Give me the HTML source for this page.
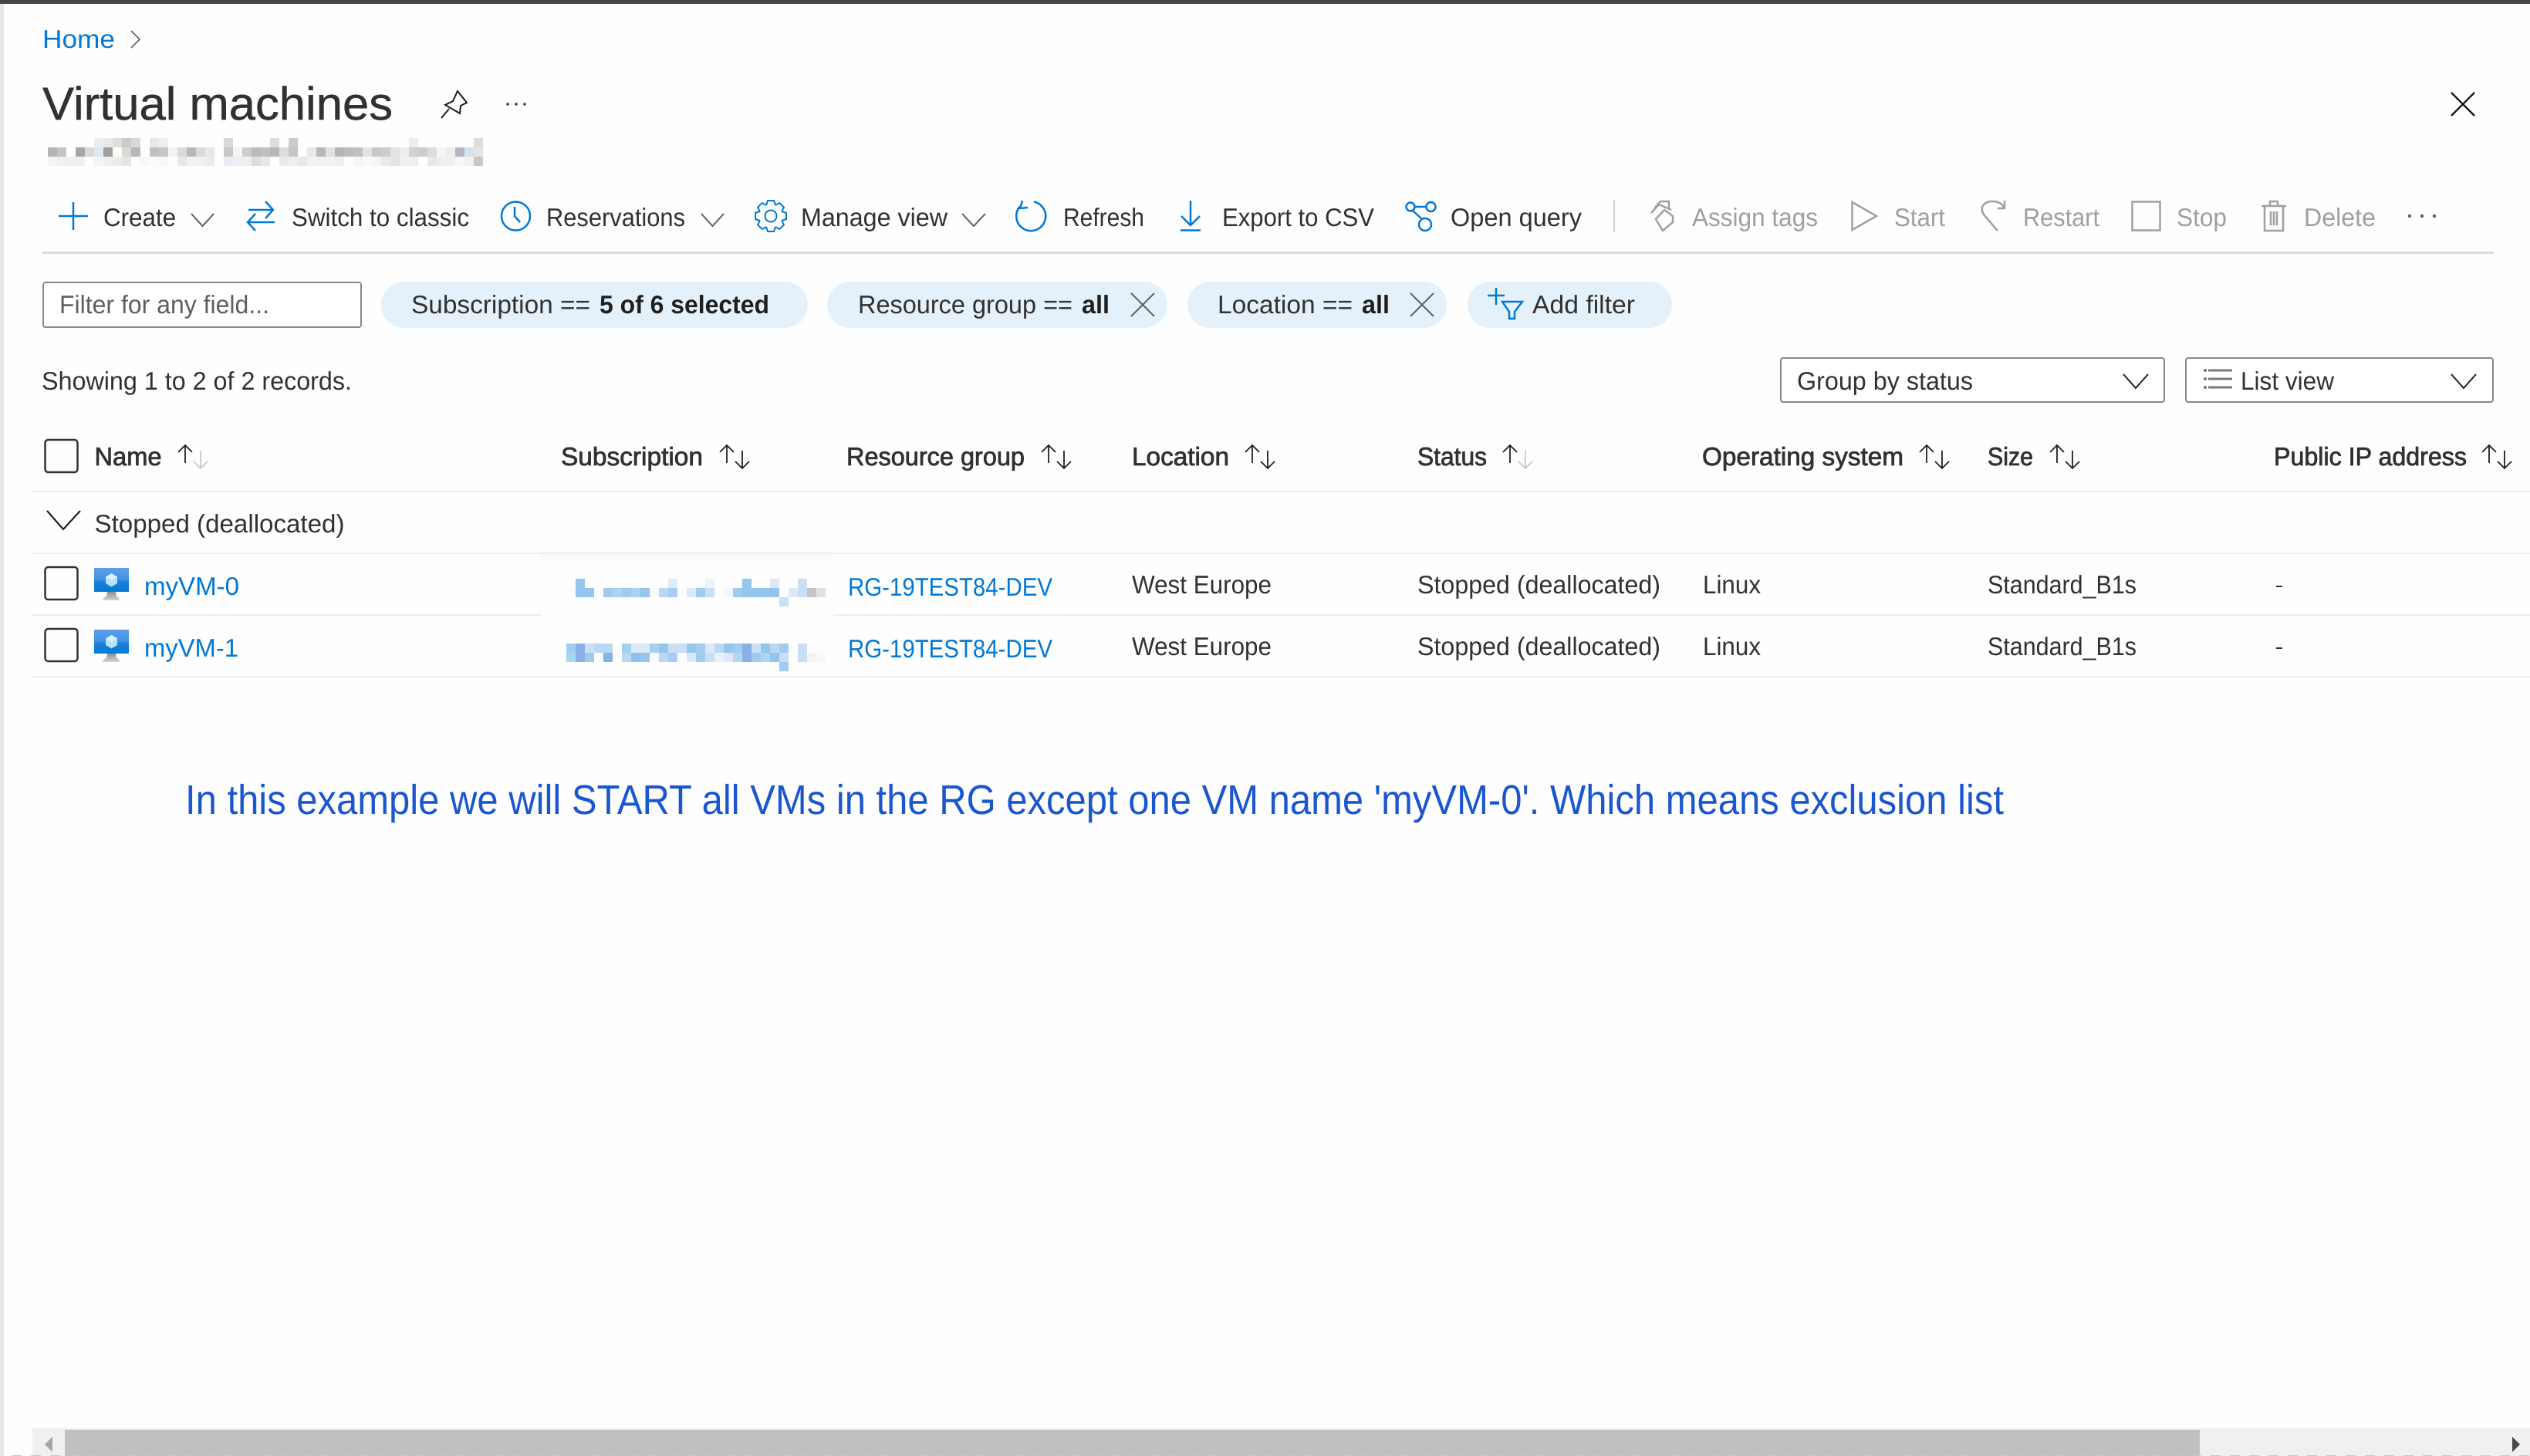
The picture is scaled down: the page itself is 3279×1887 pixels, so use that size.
<!DOCTYPE html>
<html lang="en">
<head>
<meta charset="utf-8">
<title>Virtual machines</title>
<style>
html,body{margin:0;padding:0;background:#fefefe;width:3279px;height:1887px;overflow:hidden}
svg{display:block;font-family:"Liberation Sans",sans-serif;text-rendering:geometricPrecision}
.t{font-size:33px;fill:#323130}
.d{font-size:33px;fill:#a19f9d}
.h{font-size:33px;fill:#323130;stroke:#323130;stroke-width:.8}
.l{font-size:33px;fill:#0078d4}
.b{font-size:33px;fill:#201f1e;font-weight:700}
.p rect{width:12px;height:12px}
.i{fill:none;stroke:#0078d4;stroke-width:2.5}
.g{fill:none;stroke:#a19f9d;stroke-width:2.5}
.c{fill:none;stroke:#605e5c;stroke-width:2}
.k{fill:none;stroke:#323130;stroke-width:2.5}
.a{fill:none;stroke:#201f1e;stroke-width:1.8}
.a2{fill:none;stroke:#c8c8c8;stroke-width:1.8}
</style>
</head>
<body>
<svg xmlns="http://www.w3.org/2000/svg" width="3279" height="1887" viewBox="0 0 3279 1887">
<defs>
<linearGradient id="vm" x1="0" y1="0" x2="0" y2="1"><stop offset="0" stop-color="#5ea0ea"/><stop offset=".5" stop-color="#4190e2"/><stop offset=".55" stop-color="#1f82dc"/><stop offset="1" stop-color="#0078d4"/></linearGradient>
<linearGradient id="st" x1="0" y1="0" x2="0" y2="1"><stop offset="0" stop-color="#8f8f8f"/><stop offset="1" stop-color="#d4d4d4"/></linearGradient>
<path id="up" d="M0 24V1M-9 10L0 1L9 10"/>
<path id="dn" d="M0 1V24M-9 15L0 24L9 15"/>
<g id="vmi">
<rect x="122" y="736" width="45" height="31" fill="url(#vm)"/>
<path d="M139 767H150L151 773C154 774 155 776 155 778H133C133 776 135 774 138 773Z" fill="url(#st)"/>
<path d="M144.500 743L152 747.500V756L144.500 760.500L137 756V747.500Z" fill="#b3e5fb"/>
<path d="M144.500 743L152 747.500L144.500 752L137 747.500Z" fill="#d6f4ff"/>
</g>
</defs>

<rect x="0" y="0" width="3279" height="1887" fill="#fefefe"/>
<rect x="0" y="0" width="5" height="1887" fill="#e8e8e8"/>
<rect x="0" y="0" width="3279" height="5" fill="#474544"/>

<!-- breadcrumb -->
<text class="l" x="55" y="62" textLength="94" lengthAdjust="spacingAndGlyphs">Home</text>
<path d="M170 40L181 51L170 62" fill="none" stroke="#605e5c" stroke-width="1.600"/>

<!-- title -->
<text x="55" y="155" font-size="60" fill="#323130" stroke="#323130" stroke-width=".5" textLength="454" lengthAdjust="spacingAndGlyphs">Virtual machines</text>
<path d="M593 118L605 133L597 137L596 147L577 136L587 131ZM582 141L572 153" fill="none" stroke="#1b1a19" stroke-width="2"/>
<g fill="#323130"><circle cx="658" cy="135" r="1.700"/><circle cx="669" cy="135" r="1.700"/><circle cx="680" cy="135" r="1.700"/></g>
<path d="M3177 120L3207 150M3207 120L3177 150" stroke="#111" stroke-width="2.300" fill="none"/>

<!-- blurred subtitle -->
<g class="p">
<rect x="122" y="179" fill="#eee"/><rect x="134" y="179" fill="#e8e8e8"/><rect x="146" y="179" fill="#ddd"/><rect x="158" y="179" fill="#ccc"/><rect x="170" y="179" fill="#d8d8d8"/><rect x="194" y="179" fill="#e8e8e8"/><rect x="206" y="179" fill="#eee"/><rect x="290" y="179" fill="#d8d8d8"/><rect x="350" y="179" fill="#ddd"/><rect x="374" y="179" fill="#ccc"/><rect x="530" y="179" fill="#f0ece8"/><rect x="614" y="179" fill="#ddd"/>
<rect x="62" y="191" fill="#b5b5b5"/><rect x="74" y="191" fill="#c5c5c5"/><rect x="98" y="191" fill="#a8a5a2"/><rect x="110" y="191" fill="#d8d8d8"/><rect x="122" y="191" fill="#e0e8f0"/><rect x="134" y="191" fill="#a0a0a0"/><rect x="146" y="191" fill="#fffdf5"/><rect x="158" y="191" fill="#d8d8d8"/><rect x="170" y="191" fill="#b8b8b8"/><rect x="194" y="191" fill="#c0c0c0"/><rect x="206" y="191" fill="#c8c8c8"/><rect x="218" y="191" fill="#f0f4f8"/><rect x="230" y="191" fill="#dadada"/><rect x="242" y="191" fill="#b8b8b8"/><rect x="254" y="191" fill="#d8dadc"/><rect x="266" y="191" fill="#e8e8e8"/><rect x="290" y="191" fill="#c8c8c8"/><rect x="302" y="191" fill="#f5f5f5"/><rect x="314" y="191" fill="#ccc"/><rect x="326" y="191" fill="#bbb"/><rect x="338" y="191" fill="#c0c0c0"/><rect x="350" y="191" fill="#b8b8b8"/><rect x="362" y="191" fill="#ddd"/><rect x="374" y="191" fill="#c5c5c5"/><rect x="398" y="191" fill="#e8e8e8"/><rect x="410" y="191" fill="#b8b8b8"/><rect x="422" y="191" fill="#e0e0e0"/><rect x="434" y="191" fill="#b5b5b5"/><rect x="446" y="191" fill="#bbb"/><rect x="458" y="191" fill="#c0c0c0"/><rect x="470" y="191" fill="#e5e3df"/><rect x="482" y="191" fill="#c8c8c8"/><rect x="494" y="191" fill="#ccc"/><rect x="506" y="191" fill="#e4e4e4"/><rect x="518" y="191" fill="#ededed"/><rect x="530" y="191" fill="#d0d0d0"/><rect x="542" y="191" fill="#ccc"/><rect x="554" y="191" fill="#e0dcd5"/><rect x="566" y="191" fill="#f5f5f5"/><rect x="578" y="191" fill="#eee"/><rect x="590" y="191" fill="#b5b5c0"/><rect x="602" y="191" fill="#d5e2f0"/><rect x="614" y="191" fill="#e5e5e5"/>
<rect x="62" y="203" fill="#f5f5f5"/><rect x="74" y="203" fill="#f0f0f0"/><rect x="86" y="203" fill="#f0f0f0"/><rect x="98" y="203" fill="#f0f0f0"/><rect x="122" y="203" fill="#f4f4f4"/><rect x="134" y="203" fill="#eee"/><rect x="146" y="203" fill="#ececec"/><rect x="158" y="203" fill="#e4e4e4"/><rect x="182" y="203" fill="#f8f8f8"/><rect x="194" y="203" fill="#fdfdf8"/><rect x="206" y="203" fill="#f8f8f8"/><rect x="230" y="203" fill="#e8e8e8"/><rect x="242" y="203" fill="#f2f2f2"/><rect x="254" y="203" fill="#f0f0f0"/><rect x="266" y="203" fill="#ebebeb"/><rect x="290" y="203" fill="#e8ecf4"/><rect x="302" y="203" fill="#eee"/><rect x="314" y="203" fill="#eee"/><rect x="326" y="203" fill="#ddd"/><rect x="338" y="203" fill="#e8e8e8"/><rect x="362" y="203" fill="#eaeaea"/><rect x="374" y="203" fill="#eee"/><rect x="386" y="203" fill="#e8e8e8"/><rect x="398" y="203" fill="#f2f2f2"/><rect x="410" y="203" fill="#f0f0f0"/><rect x="422" y="203" fill="#f2f2f2"/><rect x="434" y="203" fill="#eee"/><rect x="458" y="203" fill="#f5f5f5"/><rect x="470" y="203" fill="#f8f8f8"/><rect x="482" y="203" fill="#f5f5f5"/><rect x="494" y="203" fill="#eaeaea"/><rect x="506" y="203" fill="#e4e4e4"/><rect x="518" y="203" fill="#f0f0f0"/><rect x="530" y="203" fill="#eee"/><rect x="554" y="203" fill="#e8e8e8"/><rect x="566" y="203" fill="#eee"/><rect x="578" y="203" fill="#f0f0f0"/><rect x="590" y="203" fill="#f8f8f8"/><rect x="602" y="203" fill="#f0f0f0"/><rect x="614" y="203" fill="#c8c8c8"/>
</g>

<!-- toolbar -->
<path class="i" d="M76 280H114M95 262V298"/>
<text class="t" x="134" y="293" textLength="94" lengthAdjust="spacingAndGlyphs">Create</text>
<path class="c" d="M248 277L262.500 293L277 277"/>
<path class="i" d="M322 272H354M344 261L354 272L344 283M356 288H321M331 277L321 288L331 299"/>
<text class="t" x="378" y="293" textLength="230" lengthAdjust="spacingAndGlyphs">Switch to classic</text>
<circle class="i" cx="668.500" cy="280" r="18.500"/>
<path class="i" d="M667 268V280L674 288" stroke-width="2"/>
<text class="t" x="708" y="293" textLength="180" lengthAdjust="spacingAndGlyphs">Reservations</text>
<path class="c" d="M909 277L923.500 293L938 277"/>
<g transform="translate(999 280)" fill="none" stroke="#0078d4" stroke-width="2">
<circle r="7.500"/>
<path d="M-6-14L-4-20H4L6-14"/>
<path transform="rotate(45)" d="M-6-14L-4-20H4L6-14"/>
<path transform="rotate(90)" d="M-6-14L-4-20H4L6-14"/>
<path transform="rotate(135)" d="M-6-14L-4-20H4L6-14"/>
<path transform="rotate(180)" d="M-6-14L-4-20H4L6-14"/>
<path transform="rotate(225)" d="M-6-14L-4-20H4L6-14"/>
<path transform="rotate(270)" d="M-6-14L-4-20H4L6-14"/>
<path transform="rotate(315)" d="M-6-14L-4-20H4L6-14"/>
</g>
<text class="t" x="1038" y="293" textLength="190" lengthAdjust="spacingAndGlyphs">Manage view</text>
<path class="c" d="M1247 277L1262 293L1277 277"/>
<path class="i" d="M1340 261.500A19 19 0 1 1 1322 267.500M1325 260L1322 270L1332 269"/>
<text class="t" x="1378" y="293" textLength="105" lengthAdjust="spacingAndGlyphs">Refresh</text>
<path class="i" d="M1543 260V291M1531 280L1543 292L1555 280M1530 298.500H1556"/>
<text class="t" x="1584" y="293" textLength="197" lengthAdjust="spacingAndGlyphs">Export to CSV</text>
<g class="i"><circle cx="1828" cy="268" r="5.500"/><circle cx="1854.500" cy="268" r="6"/><circle cx="1847" cy="291" r="8"/><path d="M1834 268H1848M1831 273L1843 284"/></g>
<text class="t" x="1880" y="293" textLength="170" lengthAdjust="spacingAndGlyphs">Open query</text>
<rect x="2091" y="259" width="2" height="42" fill="#d2d0ce"/>
<path class="g" d="M2146 284L2157 272L2168 280V288L2155 299ZM2140 276L2150 265L2166 272M2145 269L2152 261H2163V271" stroke-width="2"/>
<text class="d" x="2193" y="293" textLength="163" lengthAdjust="spacingAndGlyphs">Assign tags</text>
<path class="g" d="M2400.500 262V298L2432 280Z"/>
<text class="d" x="2455" y="293" textLength="66" lengthAdjust="spacingAndGlyphs">Start</text>
<path class="g" d="M2589 299L2571 278C2565 268 2572 261 2582 261C2590 261 2595 264 2597 269M2598 260V270H2589"/>
<text class="d" x="2622" y="293" textLength="99" lengthAdjust="spacingAndGlyphs">Restart</text>
<rect class="g" x="2763.500" y="261.500" width="36" height="37" stroke-width="3"/>
<text class="d" x="2821" y="293" textLength="65" lengthAdjust="spacingAndGlyphs">Stop</text>
<path class="g" d="M2931 267H2963M2942 267V261H2952V267M2935 268V299H2959V268M2943 274V292M2947 274V292M2951 274V292" stroke-width="2"/>
<text class="d" x="2986" y="293" textLength="93" lengthAdjust="spacingAndGlyphs">Delete</text>
<g fill="#605e5c"><circle cx="3123" cy="280" r="2.200"/><circle cx="3139" cy="280" r="2.200"/><circle cx="3155" cy="280" r="2.200"/></g>
<rect x="55" y="326" width="3177" height="3" fill="#dcdcdc"/>

<!-- filters -->
<rect x="56" y="366" width="412" height="58" rx="3" fill="#fff" stroke="#8a8886" stroke-width="2"/>
<text x="77" y="406" font-size="33" fill="#605e5c" textLength="272" lengthAdjust="spacingAndGlyphs">Filter for any field...</text>
<rect x="494" y="365" width="553" height="60" rx="30" fill="#e5f1fa"/>
<text class="t" x="533" y="406" fill="#201f1e" textLength="232" lengthAdjust="spacingAndGlyphs">Subscription ==</text>
<text class="b" x="777" y="406" textLength="220" lengthAdjust="spacingAndGlyphs">5 of 6 selected</text>
<rect x="1072" y="365" width="441" height="60" rx="30" fill="#e5f1fa"/>
<text class="t" x="1112" y="406" textLength="278" lengthAdjust="spacingAndGlyphs">Resource group ==</text>
<text class="b" x="1402" y="406" textLength="36" lengthAdjust="spacingAndGlyphs">all</text>
<path class="c" d="M1466 380L1496 410M1496 380L1466 410"/>
<rect x="1539" y="365" width="336" height="60" rx="30" fill="#e5f1fa"/>
<text class="t" x="1578" y="406" textLength="175" lengthAdjust="spacingAndGlyphs">Location ==</text>
<text class="b" x="1765" y="406" textLength="36" lengthAdjust="spacingAndGlyphs">all</text>
<path class="c" d="M1828 380L1858 410M1858 380L1828 410"/>
<rect x="1902" y="365" width="265" height="60" rx="30" fill="#e5f1fa"/>
<path class="i" d="M1928 383H1950M1939 373V395M1947 391H1973L1963 404V413H1956V404Z"/>
<text class="t" x="1986" y="406" textLength="133" lengthAdjust="spacingAndGlyphs">Add filter</text>

<text class="t" x="54" y="505" textLength="402" lengthAdjust="spacingAndGlyphs">Showing 1 to 2 of 2 records.</text>

<rect x="2308" y="464" width="497" height="57" rx="3" fill="#fff" stroke="#8a8886" stroke-width="2"/>
<text class="t" x="2329" y="505" textLength="228" lengthAdjust="spacingAndGlyphs">Group by status</text>
<path d="M2752 485L2768 503L2784 485" fill="none" stroke="#201f1e" stroke-width="2"/>
<rect x="2833" y="464" width="398" height="57" rx="3" fill="#fff" stroke="#8a8886" stroke-width="2"/>
<path d="M2862 480H2893M2862 491H2893M2862 502H2893" stroke="#7a7a7a" stroke-width="3" fill="none"/>
<g fill="#8a7060"><circle cx="2858" cy="480" r="2"/><circle cx="2858" cy="491" r="2"/><circle cx="2858" cy="502" r="2"/></g>
<text class="t" x="2904" y="505" textLength="121" lengthAdjust="spacingAndGlyphs">List view</text>
<path d="M3177 485L3193 503L3209 485" fill="none" stroke="#201f1e" stroke-width="2"/>

<!-- table header -->
<rect class="k" x="58.500" y="570" width="42" height="42" rx="4"/>
<text class="h" x="122.500" y="603" textLength="87" lengthAdjust="spacingAndGlyphs">Name</text>
<use href="#up" class="a" x="240" y="576"/><use href="#dn" class="a2" x="260" y="583"/>
<text class="h" x="727" y="603" textLength="184" lengthAdjust="spacingAndGlyphs">Subscription</text>
<use href="#up" class="a" x="942" y="576"/><use href="#dn" class="a" x="962" y="583"/>
<text class="h" x="1097" y="603" textLength="231" lengthAdjust="spacingAndGlyphs">Resource group</text>
<use href="#up" class="a" x="1359" y="576"/><use href="#dn" class="a" x="1379" y="583"/>
<text class="h" x="1467" y="603" textLength="126" lengthAdjust="spacingAndGlyphs">Location</text>
<use href="#up" class="a" x="1623" y="576"/><use href="#dn" class="a" x="1643" y="583"/>
<text class="h" x="1837" y="603" textLength="90" lengthAdjust="spacingAndGlyphs">Status</text>
<use href="#up" class="a" x="1957" y="576"/><use href="#dn" class="a2" x="1977" y="583"/>
<text class="h" x="2206" y="603" textLength="261" lengthAdjust="spacingAndGlyphs">Operating system</text>
<use href="#up" class="a" x="2497" y="576"/><use href="#dn" class="a" x="2517" y="583"/>
<text class="h" x="2576" y="603" textLength="59" lengthAdjust="spacingAndGlyphs">Size</text>
<use href="#up" class="a" x="2666" y="576"/><use href="#dn" class="a" x="2686" y="583"/>
<text class="h" x="2947" y="603" textLength="250" lengthAdjust="spacingAndGlyphs">Public IP address</text>
<use href="#up" class="a" x="3226" y="576"/><use href="#dn" class="a" x="3246" y="583"/>

<!-- table lines -->
<rect x="42" y="636" width="3237" height="2" fill="#eeeeee"/>
<rect x="42" y="716" width="3237" height="2" fill="#eeeeee"/>
<rect x="42" y="796" width="660" height="2" fill="#eeeeee"/>
<rect x="1080" y="796" width="2199" height="2" fill="#eeeeee"/>
<rect x="42" y="876" width="3237" height="2" fill="#eeeeee"/>
<rect x="702" y="718" width="378" height="8" fill="#fafafa"/>

<!-- group row -->
<path d="M61 662L82 686L104 662" fill="none" stroke="#201f1e" stroke-width="2.200"/>
<text class="t" x="122.500" y="690" textLength="324" lengthAdjust="spacingAndGlyphs">Stopped (deallocated)</text>

<!-- row 1 -->
<rect class="k" x="58.500" y="735" width="42" height="42" rx="4"/>
<use href="#vmi"/>
<text class="l" x="187" y="771" textLength="123" lengthAdjust="spacingAndGlyphs">myVM-0</text>
<g class="p">
<rect x="746" y="750" fill="#95c5ec"/><rect x="866" y="750" fill="#e0ebf9"/><rect x="914" y="750" fill="#edf3fb"/><rect x="962" y="750" fill="#95c5ec"/><rect x="998" y="750" fill="#dde8f8"/><rect x="1034" y="750" fill="#c9dff5"/>
<rect x="734" y="762" fill="#fafcff"/><rect x="746" y="762" fill="#95c5ec"/><rect x="758" y="762" fill="#95c5ec"/><rect x="782" y="762" fill="#a0caee"/><rect x="794" y="762" fill="#a6d5f5"/><rect x="806" y="762" fill="#a3caee"/><rect x="818" y="762" fill="#a5d5f5"/><rect x="830" y="762" fill="#95c5ec"/><rect x="842" y="762" fill="#f8fbfe"/><rect x="854" y="762" fill="#bad8f3"/><rect x="866" y="762" fill="#a6cef1"/><rect x="890" y="762" fill="#dde8f8"/><rect x="902" y="762" fill="#a3cbf0"/><rect x="914" y="762" fill="#c9dff5"/><rect x="938" y="762" fill="#f4f7fc"/><rect x="950" y="762" fill="#a0caee"/><rect x="962" y="762" fill="#95c5ec"/><rect x="974" y="762" fill="#95c5ec"/><rect x="986" y="762" fill="#95c5ec"/><rect x="998" y="762" fill="#95c5ec"/><rect x="1022" y="762" fill="#dde8f8"/><rect x="1034" y="762" fill="#c9dff5"/><rect x="1046" y="762" fill="#c3c4c8"/><rect x="1058" y="762" fill="#e2e1de"/>
<rect x="1010" y="774" fill="#c9dff5"/>
</g>
<text class="l" x="1099" y="772" textLength="265" lengthAdjust="spacingAndGlyphs">RG-19TEST84-DEV</text>
<text class="t" x="1467" y="769" textLength="181" lengthAdjust="spacingAndGlyphs">West Europe</text>
<text class="t" x="1837" y="769" textLength="315" lengthAdjust="spacingAndGlyphs">Stopped (deallocated)</text>
<text class="t" x="2207" y="769" textLength="75" lengthAdjust="spacingAndGlyphs">Linux</text>
<text class="t" x="2576" y="769" textLength="193" lengthAdjust="spacingAndGlyphs">Standard_B1s</text>
<rect x="2950" y="759" width="8" height="2" fill="#323130"/>

<!-- row 2 -->
<rect class="k" x="58.500" y="815" width="42" height="42" rx="4"/>
<use href="#vmi" y="80"/>
<text class="l" x="187" y="851" textLength="122" lengthAdjust="spacingAndGlyphs">myVM-1</text>
<g class="p">
<rect x="734" y="834" fill="#a3cdf0"/><rect x="746" y="834" fill="#8ab0e8"/><rect x="758" y="834" fill="#c9dff5"/><rect x="770" y="834" fill="#bad8f3"/><rect x="782" y="834" fill="#b8d9f3"/><rect x="806" y="834" fill="#a6cef1"/><rect x="818" y="834" fill="#dde8f8"/><rect x="830" y="834" fill="#dde8f8"/><rect x="842" y="834" fill="#a6cef1"/><rect x="854" y="834" fill="#95c5ec"/><rect x="866" y="834" fill="#c9dff5"/><rect x="878" y="834" fill="#c9dff5"/><rect x="890" y="834" fill="#95c5ec"/><rect x="902" y="834" fill="#a3cbf0"/><rect x="914" y="834" fill="#dde8f8"/><rect x="926" y="834" fill="#bad8f3"/><rect x="938" y="834" fill="#95c5ec"/><rect x="950" y="834" fill="#a3cbf0"/><rect x="962" y="834" fill="#8ab0e8"/><rect x="974" y="834" fill="#c9dff5"/><rect x="986" y="834" fill="#95c5ec"/><rect x="998" y="834" fill="#b8d9f3"/><rect x="1010" y="834" fill="#a3cbf0"/><rect x="1034" y="834" fill="#c9dff5"/>
<rect x="734" y="846" fill="#a6d5f5"/><rect x="746" y="846" fill="#8ab0e8"/><rect x="758" y="846" fill="#a0caee"/><rect x="782" y="846" fill="#8ab0e8"/><rect x="806" y="846" fill="#bad8f3"/><rect x="818" y="846" fill="#8cbfee"/><rect x="830" y="846" fill="#95c5ec"/><rect x="842" y="846" fill="#f8fbfe"/><rect x="854" y="846" fill="#bad8f3"/><rect x="866" y="846" fill="#a6cef1"/><rect x="890" y="846" fill="#dde8f8"/><rect x="902" y="846" fill="#a3cbf0"/><rect x="914" y="846" fill="#c9dff5"/><rect x="926" y="846" fill="#e8f2fb"/><rect x="938" y="846" fill="#dde8f8"/><rect x="950" y="846" fill="#b5d6f3"/><rect x="962" y="846" fill="#8ab0e8"/><rect x="974" y="846" fill="#a0caee"/><rect x="986" y="846" fill="#a6d5f5"/><rect x="998" y="846" fill="#95c5ec"/><rect x="1010" y="846" fill="#c9dff5"/><rect x="1034" y="846" fill="#c9dff5"/><rect x="1046" y="846" fill="#f3f4f4"/><rect x="1058" y="846" fill="#f9f9f9"/>
<rect x="1010" y="858" fill="#a3cbf0"/>
</g>
<text class="l" x="1099" y="852" textLength="265" lengthAdjust="spacingAndGlyphs">RG-19TEST84-DEV</text>
<text class="t" x="1467" y="849" textLength="181" lengthAdjust="spacingAndGlyphs">West Europe</text>
<text class="t" x="1837" y="849" textLength="315" lengthAdjust="spacingAndGlyphs">Stopped (deallocated)</text>
<text class="t" x="2207" y="849" textLength="75" lengthAdjust="spacingAndGlyphs">Linux</text>
<text class="t" x="2576" y="849" textLength="193" lengthAdjust="spacingAndGlyphs">Standard_B1s</text>
<rect x="2950" y="839" width="8" height="2" fill="#323130"/>

<!-- annotation -->
<text x="240" y="1055" font-size="54" fill="#1a56cf" textLength="2357" lengthAdjust="spacingAndGlyphs">In this example we will START all VMs in the RG except one VM name 'myVM-0'. Which means exclusion list</text>

<!-- scrollbar -->
<rect x="42" y="1851" width="3237" height="36" fill="#f0f0f0"/>
<rect x="84" y="1853" width="2767" height="34" fill="#c0c0c0"/>
<path d="M68 1862V1882L58 1872Z" fill="#a6a6a6"/>
<path d="M3256 1862V1882L3266 1872Z" fill="#4a4a4a"/>
<path d="M15 1886.500H3279" stroke="#c8c8c8" stroke-width="1" stroke-dasharray="13 12" fill="none"/>
</svg>
</body>
</html>
